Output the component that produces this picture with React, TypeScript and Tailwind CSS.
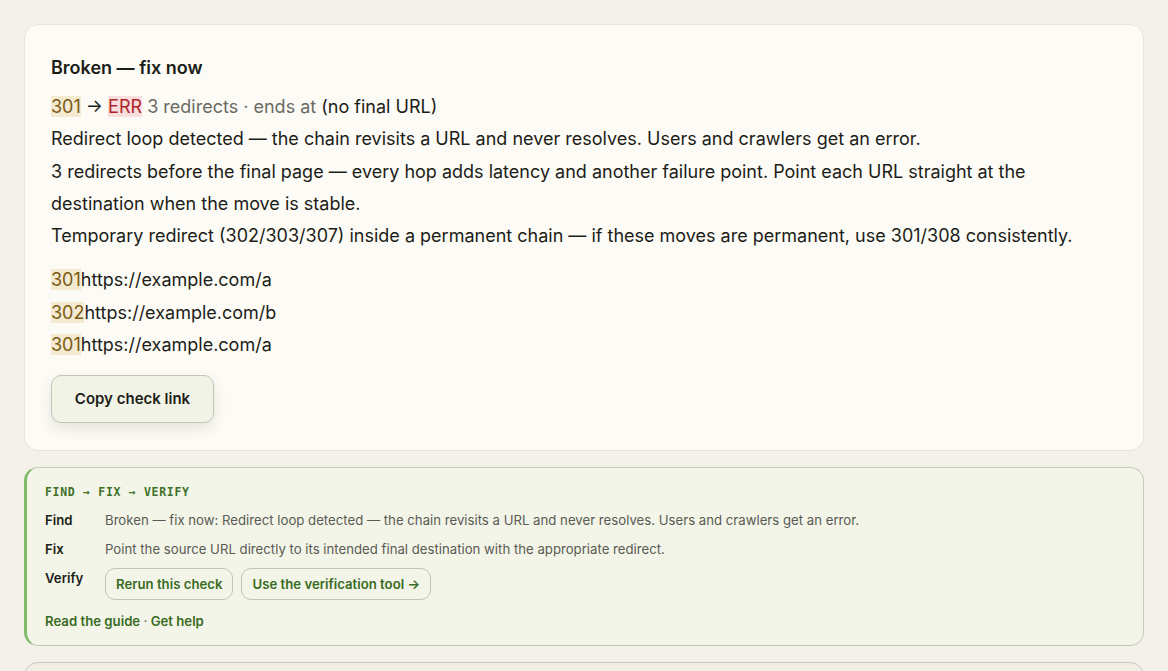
import React from "react";

const hops = [
  { code: "301", url: "https://example.com/a" },
  { code: "302", url: "https://example.com/b" },
  { code: "301", url: "https://example.com/a" },
];

const ResultCard = () => {
  return (
    <div className="rounded-[14px] border border-[#e7e4da] bg-[#fcfbf6] px-[26px] pt-[30px] pb-[27px]">
      <h2 className="text-[18px] font-semibold leading-[26px] text-[#1d1d18]">Broken — fix now</h2>
      <div className="mt-[10px] text-[18px] leading-[32.3px] text-[#1d1d18]">
        <div>
          <span className="bg-[#f4ead1] text-[#7a5a12]">301</span> →{" "}
          <span className="bg-[#f8dedd] text-[#b0252b]">ERR</span>{" "}
          <span className="text-[#6b6a63]">3 redirects · ends at</span> (no final URL)
        </div>
        <p>Redirect loop detected — the chain revisits a URL and never resolves. Users and crawlers get an error.</p>
        <p className="max-w-[1010px]">
          3 redirects before the final page — every hop adds latency and another failure point. Point each URL straight at the destination when the move is stable.
        </p>
        <p>Temporary redirect (302/303/307) inside a permanent chain — if these moves are permanent, use 301/308 consistently.</p>
      </div>
      <div className="mt-[12px] text-[18px] leading-[32.3px] text-[#1d1d18]">
        {hops.map((h, i) => (
          <div key={i}>
            <span className="bg-[#f4ead1] text-[#7a5a12]">{h.code}</span>
            {h.url}
          </div>
        ))}
      </div>
      <button className="mt-[14px] h-[48px] w-[163px] rounded-[10px] border border-[#c4c4b6] bg-[#f1f3e6] text-[15px] font-semibold text-[#1d1d18] shadow-[0_6px_14px_rgba(60,60,40,0.12)]">
        Copy check link
      </button>
    </div>
  );
};

const FixCard = () => {
  return (
    <div className="rounded-[14px] border border-[#c9c9ba] border-l-[3px] border-l-[#7fbb68] bg-[#f3f5e9] pl-[18px] pr-5 pt-[16px] pb-[14px]">
      <div className="font-['DejaVu_Sans_Mono',monospace] text-[11.5px] font-bold tracking-[0.06em] text-[#3f7128]">
        FIND → FIX → VERIFY
      </div>
      <div className="mt-[8px] grid grid-cols-[60px_1fr] gap-y-[9px] text-[13.2px] leading-[20px]">
        <div className="font-semibold text-[#1d1d18]">Find</div>
        <div className="text-[#5a5a54]">
          Broken — fix now: Redirect loop detected — the chain revisits a URL and never resolves. Users and crawlers get an error.
        </div>
        <div className="font-semibold text-[#1d1d18]">Fix</div>
        <div className="text-[#5a5a54]">
          Point the source URL directly to its intended final destination with the appropriate redirect.
        </div>
        <div className="font-semibold text-[#1d1d18]">Verify</div>
        <div className="flex gap-2">
          <button className="h-[32px] rounded-[10px] border border-[#c4c4b6] px-[10px] text-[13.2px] font-semibold text-[#3a6b23]">
            Rerun this check
          </button>
          <button className="h-[32px] rounded-[10px] border border-[#c4c4b6] px-[10px] text-[13.2px] font-semibold text-[#3a6b23]">
            Use the verification tool →
          </button>
        </div>
      </div>
      <div className="mt-[11px] text-[13.2px] font-semibold leading-[20px] text-[#3a6b23]">
        Read the guide <span className="font-normal text-[#6b6a63]">·</span> Get help
      </div>
    </div>
  );
};

export default function App() {
  return (
    <div className="min-h-screen bg-[#f3f1ea] px-6 pt-6 font-['Inter',sans-serif]">
      <div className="flex flex-col gap-4">
        <ResultCard />
        <FixCard />
        <div className="h-[60px] rounded-[14px] border border-[#c9c9ba] bg-[#f0eee5]"></div>
      </div>
    </div>
  );
}
